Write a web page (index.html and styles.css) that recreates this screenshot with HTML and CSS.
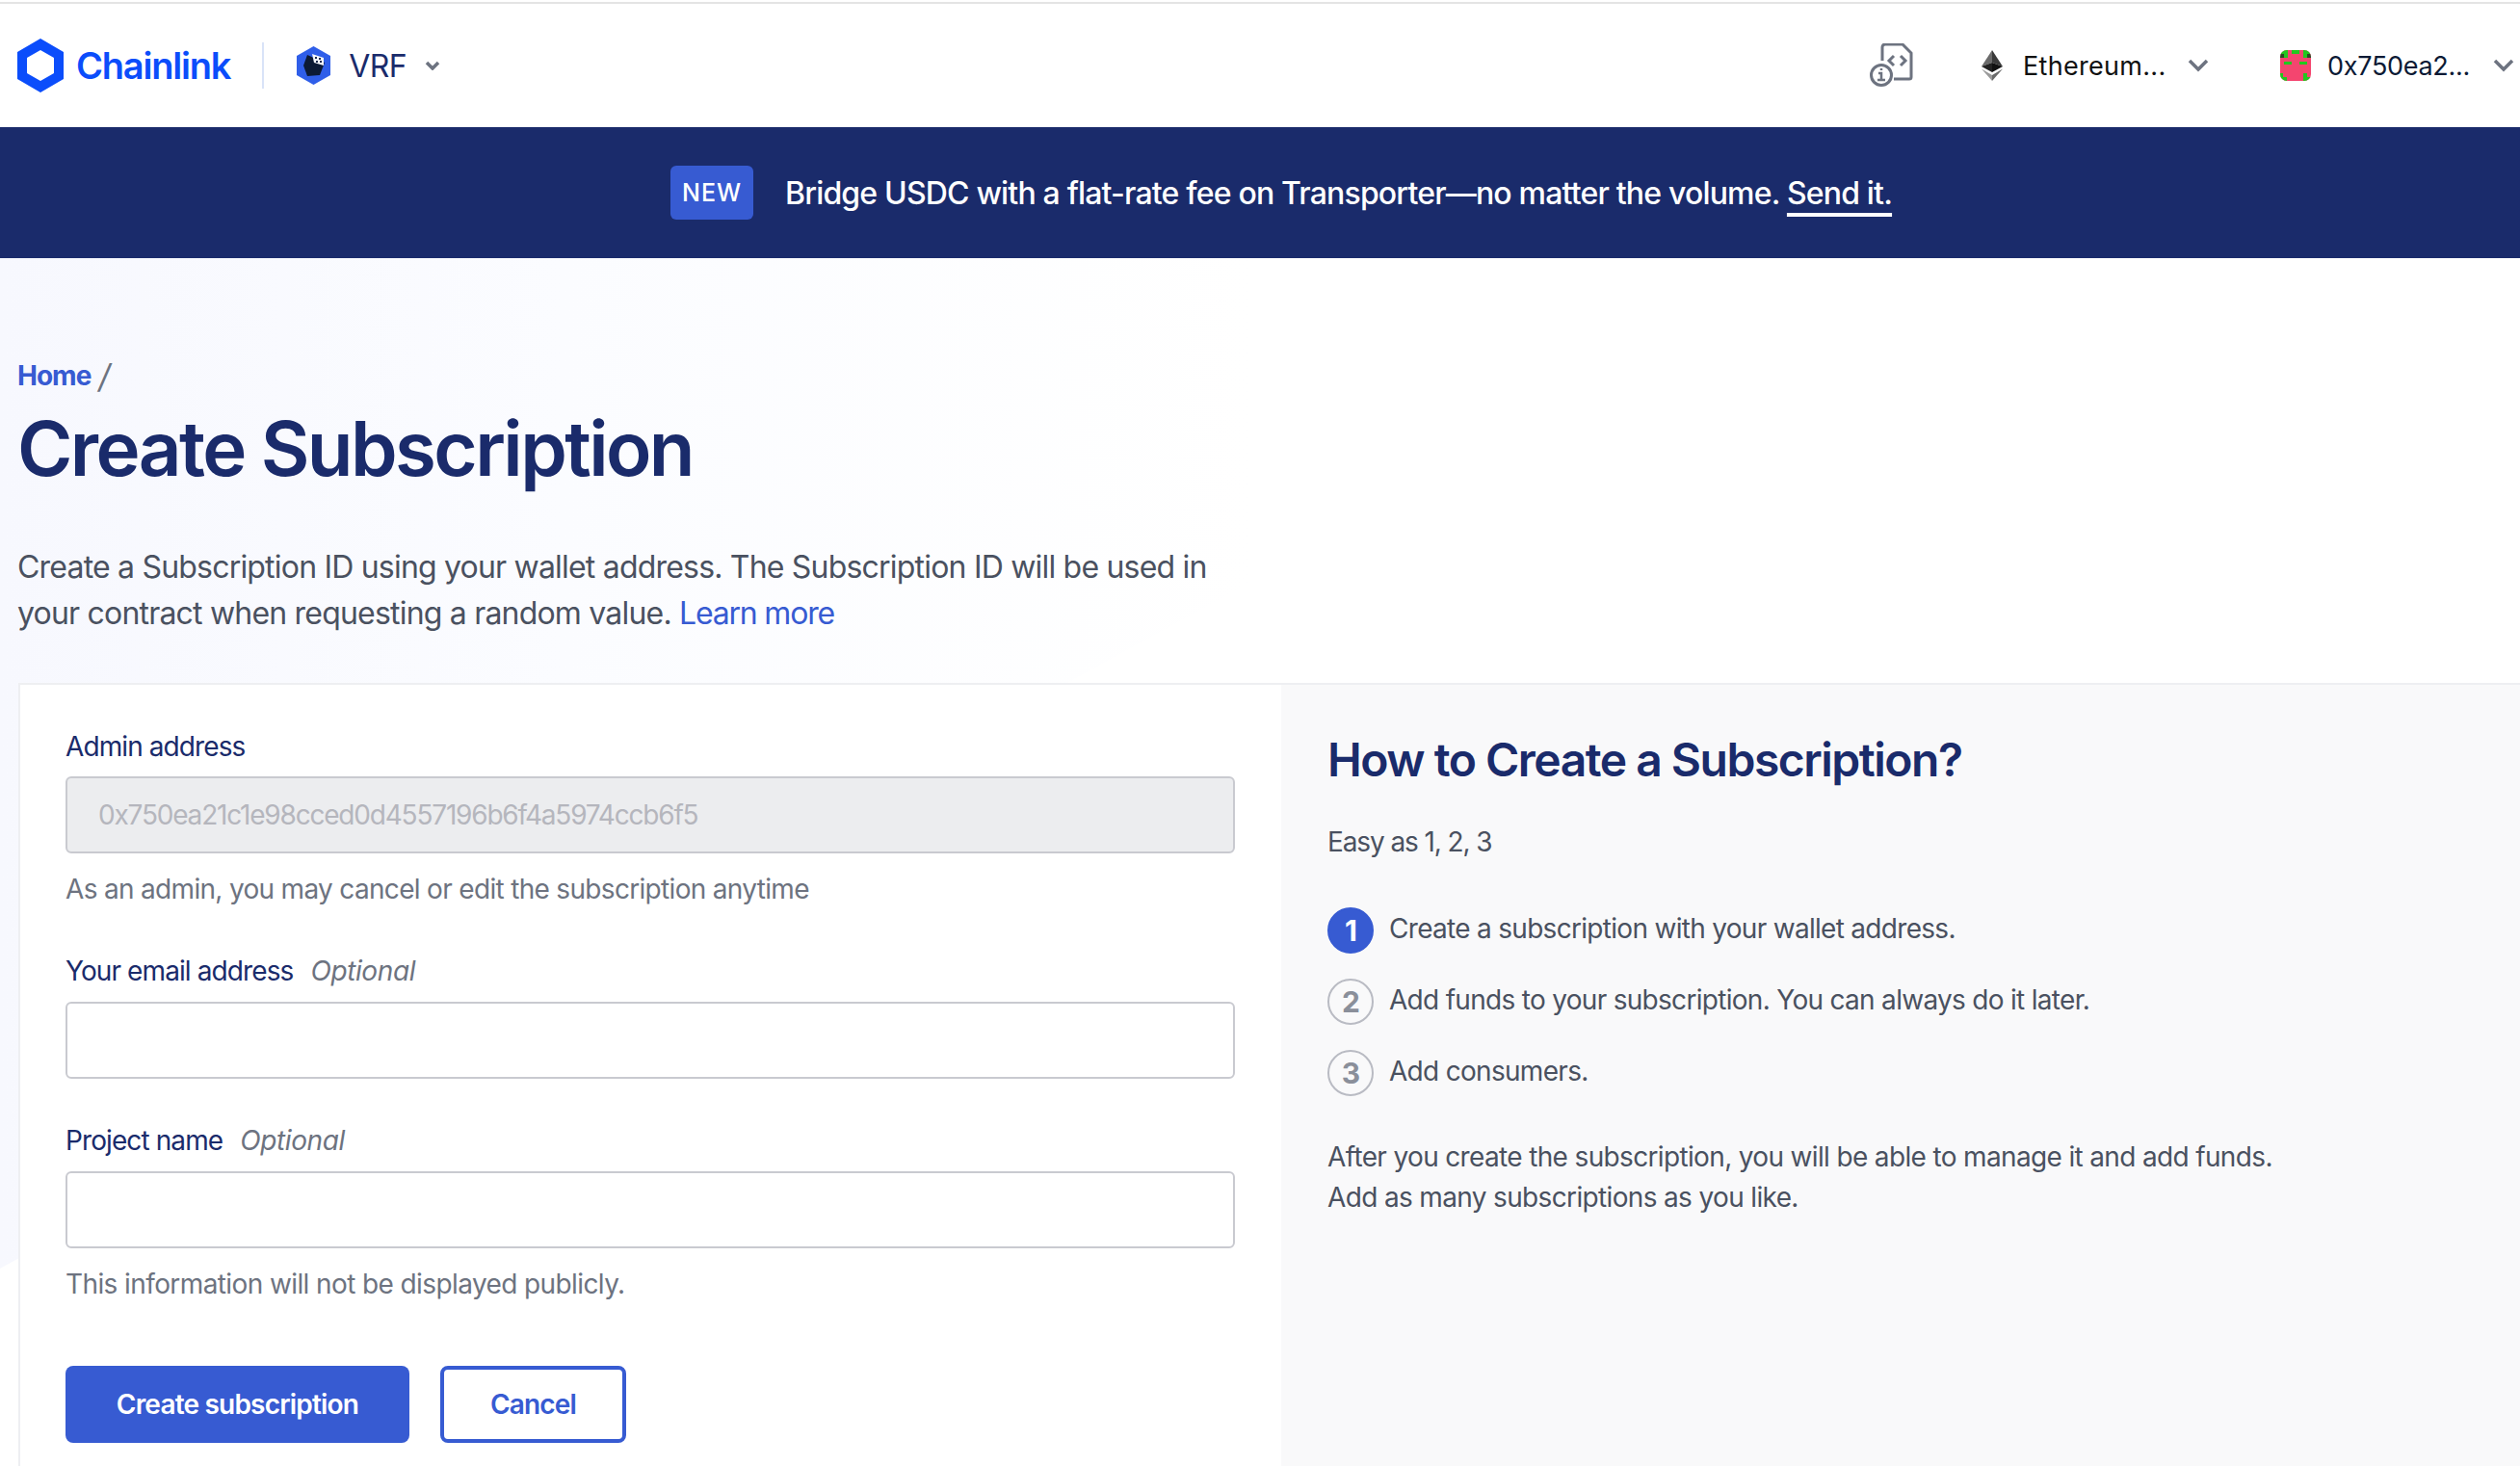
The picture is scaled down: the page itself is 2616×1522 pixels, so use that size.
FILE: index.html
```html
<!DOCTYPE html>
<html lang="en">
<head>
<meta charset="utf-8">
<title>Create Subscription</title>
<link rel="stylesheet" href="styles.css">
</head>
<body>
<div class="topline"></div>
<header class="nav">
  <div class="nav-left">
    <svg class="logo" viewBox="0 0 48 56"><path fill-rule="evenodd" fill="#0b4dfb" d="M24 0 48 14V42L24 56 0 42V14ZM24 12 10 20V36L24 44 38 36V20Z"/></svg>
    <span class="brand">Chainlink</span>
    <span class="divider"></span>
    <svg class="vrf-icon" viewBox="0 0 35 40">
      <path fill="#2f5ee9" d="M17.5 0 35 10V30L17.5 40 0 30V10Z"/>
      <path fill="#0c1a35" d="M11 9 29 17 24 30 11 31 7 20Z"/>
      <path fill="#f4f6fb" d="M16 8 28 12 28 20 18 17Z"/>
      <path fill="#1c2b4f" d="M19 11h2v2h-2zM23 12h2v2h-2zM20 15h2v2h-2zM24 15h2v2h-2z"/>
    </svg>
    <span class="product">VRF</span>
    <svg class="chev chev-sm" viewBox="0 0 16 10"><path d="M2 2l6 6 6-6"/></svg>
  </div>
  <div class="nav-right">
    <svg class="doc-icon" viewBox="0 0 46 46">
      <path class="doc-line" d="M14 18V4a3 3 0 0 1 3-3H35L44 10V35a2 2 0 0 1-2 2H26"/>
      <path class="doc-line" d="M26 13l-5 5 5 5M33 13l5 5-5 5"/>
      <circle class="doc-line" cx="13" cy="33" r="10.5"/>
      <path class="doc-line doc-thin" d="M10 31h3v7M9 38h8M13 26v2"/>
    </svg>
    <svg class="eth" viewBox="0 0 22 32">
      <path fill="#6b6b6b" d="M11 0 0 17 11 13Z"/>
      <path fill="#3a3a3a" d="M11 0 22 17 11 13Z"/>
      <path fill="#222" d="M0 17 11 13V23Z"/>
      <path fill="#111" d="M22 17 11 13V23Z"/>
      <path fill="#9a9a9a" d="M0 19.500 11 32V26Z"/>
      <path fill="#6b6b6b" d="M22 19.500 11 32V26Z"/>
    </svg>
    <span class="net">Ethereum...</span>
    <svg class="chev chev-lg" viewBox="0 0 22 14"><path d="M2 2l9 9 9-9"/></svg>
    <svg class="avatar" viewBox="0 0 32 32" shape-rendering="crispEdges">
      <rect width="32" height="32" fill="#f4456f"/>
      <path fill="#22c81f" d="M0 0h8v4H0zM12 0h8v4h-8zM24 0h8v4h-8zM4 4h4v4H4zM24 4h4v4h-4zM4 12h8v3H4zM20 12h8v3h-8zM0 24h3v8H0zM3 28h4v4H3zM24 24h4v8h-4zM28 28h4v4h-4z"/>
      <path fill="#2b4a24" d="M0 4h4v4H0zM28 4h4v4h-4z"/>
    </svg>
    <span class="addr">0x750ea2...</span>
    <svg class="chev chev-lg" viewBox="0 0 22 14"><path d="M2 2l9 9 9-9"/></svg>
  </div>
</header>
<div class="banner">
  <span class="badge">NEW</span>
  <span class="banner-text">Bridge USDC with a flat-rate fee on Transporter—no matter the volume. <a class="send">Send it.</a></span>
</div>
<main class="main">
  <nav class="crumbs"><a class="crumb-link">Home</a><span class="crumb-sep">/</span></nav>
  <h1 class="title">Create Subscription</h1>
  <p class="intro">Create a Subscription ID using your wallet address. The Subscription ID will be used in<br>your contract when requesting a random value. <a class="link">Learn more</a></p>
  <section class="card">
    <form class="form">
      <label class="label">Admin address</label>
      <div class="input input-disabled">0x750ea21c1e98cced0d4557196b6f4a5974ccb6f5</div>
      <p class="help">As an admin, you may cancel or edit the subscription anytime</p>
      <label class="label label-2">Your email address <em class="opt">Optional</em></label>
      <div class="input"></div>
      <label class="label label-3">Project name <em class="opt">Optional</em></label>
      <div class="input"></div>
      <p class="help help-2">This information will not be displayed publicly.</p>
      <div class="actions">
        <button type="button" class="btn btn-primary">Create subscription</button>
        <button type="button" class="btn btn-outline">Cancel</button>
      </div>
    </form>
    <aside class="side">
      <h2 class="side-title">How to Create a Subscription?</h2>
      <p class="side-sub">Easy as 1, 2, 3</p>
      <ol class="steps">
        <li class="step"><span class="num num-active">1</span><span class="step-text">Create a subscription with your wallet address.</span></li>
        <li class="step"><span class="num">2</span><span class="step-text">Add funds to your subscription. You can always do it later.</span></li>
        <li class="step"><span class="num">3</span><span class="step-text">Add consumers.</span></li>
      </ol>
      <p class="side-note">After you create the subscription, you will be able to manage it and add funds.<br>Add as many subscriptions as you like.</p>
    </aside>
  </section>
</main>
</body>
</html>
```
FILE: styles.css
```css
* { box-sizing: border-box; }
html, body { margin: 0; padding: 0; }
body {
  width: 2616px; height: 1522px; overflow: hidden; background: #fff;
  font-family: Inter, "Liberation Sans", sans-serif;
  letter-spacing: -0.8px;
}
.topline { height: 4px; border-top: 2px solid #fff; background: #e4e4e4; }
.nav {
  height: 128px; display: flex; align-items: center; justify-content: space-between;
  padding: 0 6px 0 18px; background: #fff;
}
.nav-left, .nav-right { display: flex; align-items: center; }
.logo { width: 48px; height: 56px; }
.brand { margin-left: 13px; font-size: 38px; font-weight: 600; color: #0b4dfb; letter-spacing: -1.2px; }
.divider { width: 2px; height: 48px; background: #d9e3f8; margin-left: 33px; }
.vrf-icon { width: 35px; height: 40px; margin-left: 34px; }
.product { margin-left: 19px; font-size: 32px; color: #1a2b6b; letter-spacing: -0.6px; }
.chev { fill: none; stroke: #6d7380; stroke-width: 3.500; }
.chev-sm { width: 16px; height: 10px; margin-left: 19px; }
.chev-lg { width: 22px; height: 14px; }
.doc-icon { width: 46px; height: 46px; }
.doc-line { fill: none; stroke: #6d7380; stroke-width: 3; }
.doc-thin { stroke-width: 2.500; }
.eth { width: 22px; height: 32px; margin-left: 71px; }
.net { margin-left: 21px; font-size: 27px; color: #111; width: 148px; white-space: nowrap; letter-spacing: 0.3px; }
.net + .chev { margin-left: 23px; }
.avatar { width: 32px; height: 32px; border-radius: 7px; margin-left: 74px; }
.addr { margin-left: 17px; font-size: 27px; color: #0c1a35; width: 150px; white-space: nowrap; letter-spacing: -0.3px; }
.addr + .chev { margin-left: 22px; }

.banner {
  height: 136px; background: #1a2b6b; color: #fff; display: flex; align-items: center;
  padding-left: 696px;
}
.badge {
  width: 86px; height: 56px; border-radius: 6px; background: #375bd2; display: flex;
  align-items: center; justify-content: center; font-size: 25px; font-weight: 500; letter-spacing: 1px;
}
.banner-text { margin-left: 33px; font-size: 32px; font-weight: 500; white-space: nowrap; letter-spacing: -0.82px; }
.send { text-decoration: underline; text-decoration-thickness: 4px; text-underline-offset: 9px; text-decoration-skip-ink: none; }

.main { position: relative; padding: 104px 0 0 18px; height: 1254px; }
.main::before {
  content: ""; position: absolute; left: 0; top: 0; width: 1300px; height: 1049px; z-index: -1;
  background: linear-gradient(90deg, #f7f8fe 0, #fbfcff 45%, #fff 100%);
  clip-path: polygon(0 0, 100% 0, 100% 32%, 0 100%);
}
.crumbs { height: 36px; display: flex; align-items: center; font-size: 28px; }
.crumb-link { color: #375bd2; font-weight: 700; letter-spacing: -1px; }
.crumb-sep { color: #6d7380; margin-left: 8px; font-size: 34px; font-style: italic; }
.title { margin: 14px 0 0; font-size: 78px; line-height: 88px; font-weight: 600; color: #1a2b6b; letter-spacing: -2.600px; }
.intro { margin: 55px 0 0; font-size: 32px; line-height: 48px; color: #4a5160; }
.link { color: #375bd2; letter-spacing: -1.200px; }
.card {
  margin: 48px 0 0 1px; height: 813px; display: flex; background: #fff;
  border-top: 2px solid #eeeff2; border-left: 2px solid #eeeff2;
}
.form { width: 1309px; flex: none; padding: 46px 0 0 47px; }
.label { display: block; height: 36px; line-height: 36px; font-size: 28px; color: #1a2b6b; letter-spacing: -0.9px; }
.label-2 { margin-top: 49px; }
.label-3 { margin-top: 46px; }
.opt { margin-left: 11px; color: #6d7380; letter-spacing: -0.4px; }
.input {
  width: 1214px; height: 80px; margin-top: 14px; border: 2px solid #c9cad0; border-radius: 6px;
  background: #fff; display: flex; align-items: center; padding-left: 32px;
  font-size: 28px;
}
.input-disabled { background: #ecedef; color: #b5b6bd; margin-top: 13px; letter-spacing: -1.2px; }
.help { margin: 19px 0 0; font-size: 28px; line-height: 36px; color: #6d7380; letter-spacing: -0.68px; }
.help-2 { letter-spacing: -0.6px; }
.actions { display: flex; gap: 32px; margin-top: 67px; }
.btn { height: 80px; border-radius: 8px; font: inherit; font-size: 28px; font-weight: 600; letter-spacing: -0.8px; }
.btn-primary { width: 357px; background: #375bd2; color: #fff; border: none; }
.btn-outline { width: 193px; background: #fff; color: #375bd2; border: 4px solid #375bd2; }
.side { flex: 1; background: #f9f9fa; padding: 48px 0 0 48px; }
.side-title { margin: 0; font-size: 48px; line-height: 60px; font-weight: 600; color: #1a2b6b; letter-spacing: -1.500px; }
.side-sub { margin: 37px 0 0; font-size: 28px; line-height: 36px; color: #4a5160; letter-spacing: -1.100px; }
.steps { list-style: none; margin: 50px 0 0; padding: 0; }
.step { display: flex; align-items: center; height: 48px; margin-bottom: 26px; font-size: 28px; color: #4a5160; letter-spacing: -0.7px; }
.step-text { margin-top: -4px; }
.num {
  width: 48px; height: 48px; border-radius: 50%; border: 2px solid #b9bbc3; color: #8a8f9a; display: flex;
  align-items: center; justify-content: center; font-weight: 700; font-size: 30px; margin-right: 16px;
}
.num-active { background: #375bd2; border-color: #375bd2; color: #fff; }
.side-note { margin: 42px 0 0; font-size: 28px; line-height: 42px; color: #4a5160; letter-spacing: -0.65px; }
```
